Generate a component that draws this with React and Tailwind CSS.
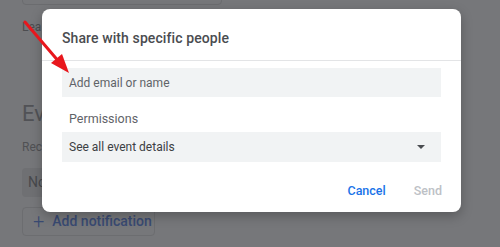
import React from 'react';

export default function App() {
    return (
        <div className="relative w-[500px] h-[247px] overflow-hidden bg-[#76777a] font-['Roboto',sans-serif]">
            {/* page behind the dimmed overlay */}
            <div className="flex flex-col pl-[22px]">
                <div className="w-[200px] h-[6px] -mt-px border border-[#6b6c6f] rounded-b-[4px]" />
                <div className="mt-[15px] text-[12px] text-[#4c4d50] leading-[14px]">Lea</div>
                <div className="mt-[67px] text-[22px] text-[#515256] leading-[26px]">Eve</div>
                <div className="mt-[13px] text-[12px] text-[#505154] leading-[14px]">Rece</div>
                <div className="mt-[14px] w-[200px] h-[29px] bg-[#6f7073] rounded-[4px] flex items-center pl-[6px] text-[14px] text-[#48494c]">No</div>
                <div className="mt-[10px] w-[133px] h-[29px] border border-[#6c6d70] rounded-[4px] flex items-center gap-[8px] pl-[10px] text-[14px] font-medium text-[#394a72]">
                    <span className="text-[20px] font-light leading-none -mt-[2px]">+</span>
                    <span>Add notification</span>
                </div>
            </div>

            {/* dialog */}
            <div className="absolute left-[42px] top-[9px] w-[419px] h-[203px] bg-white rounded-[8px] shadow-[0_4px_12px_rgba(0,0,0,0.25)] flex flex-col">
                <div className="h-[51px] flex items-center pl-[20px] pt-[8px] text-[14px] font-medium text-[#4a4c50] tracking-[0.1px]">
                    Share with specific people
                </div>
                <div className="h-px bg-[#e3e4e6]" />
                <div className="px-[20px] pt-[7px] flex flex-col">
                    <div className="h-[29px] bg-[#f1f3f4] flex items-center pl-[7px] text-[12px] text-[#5f6368]">
                        Add email or name
                    </div>
                    <div className="mt-[14px] pl-[7px] text-[12.5px] text-[#5f6368] leading-[15px]">Permissions</div>
                    <div className="mt-[6px] h-[30px] bg-[#f1f3f4] flex items-center justify-between pl-[7px] pr-[16px] text-[12px] text-[#3c4043]">
                        <span>See all event details</span>
                        <span className="w-0 h-0 border-l-[4px] border-r-[4px] border-t-[4px] border-l-transparent border-r-transparent border-t-[#4a4c50]" />
                    </div>
                </div>
                <div className="mt-[20px] flex justify-end items-center gap-[28px] pr-[19px] text-[12.5px] font-medium">
                    <span className="text-[#1a73e8]">Cancel</span>
                    <span className="text-[#bdc1c6]">Send</span>
                </div>
            </div>

            {/* red pointer arrow */}
            <svg className="absolute left-0 top-0" width="500" height="247" viewBox="0 0 500 247">
                <line x1="25" y1="22" x2="60" y2="63" stroke="#e8171d" strokeWidth="3" strokeLinecap="round" />
                <polygon points="69,73 51,63 62,54" fill="#e8171d" />
            </svg>
        </div>
    );
}
